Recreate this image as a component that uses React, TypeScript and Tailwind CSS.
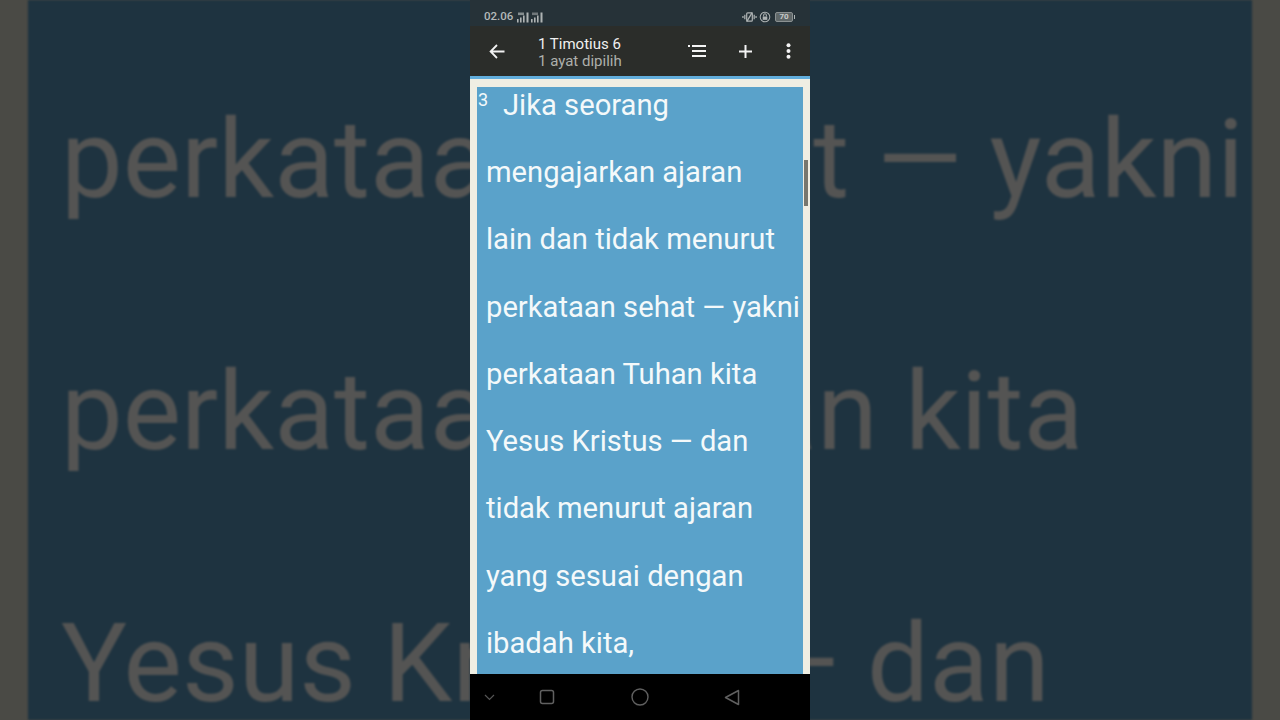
import React from "react";

const roboto = { fontFamily: "Roboto, sans-serif" };

function Signal({ label }: { label: string }) {
  return (
    <svg width="13" height="11" viewBox="0 0 13 11" fill="#aeb3b3">
      <rect x="0" y="7" width="1.6" height="3.5" />
      <rect x="3" y="5.5" width="1.6" height="5" />
      <rect x="6" y="3.5" width="1.6" height="7" />
      <rect x="9.5" y="0.5" width="2" height="10" />
      <rect x="1" y="0.5" width="6" height="2.6" opacity={label === "4G" ? 0.7 : 0.55} />
    </svg>
  );
}

const lines = [
  "mengajarkan ajaran",
  "lain dan tidak menurut",
  "perkataan sehat — yakni",
  "perkataan Tuhan kita",
  "Yesus Kristus — dan",
  "tidak menurut ajaran",
  "yang sesuai dengan",
  "ibadah kita,",
];

export default function App() {
  return (
    <div className="relative flex h-[720px] w-[1280px] justify-center overflow-hidden bg-[#4a4a45]" style={roboto}>
      <div className="absolute inset-y-0 left-[28px] w-[1224px] overflow-hidden bg-[#1e3340] pl-[33px] pt-[34px] text-[110px] leading-[252px] whitespace-nowrap text-[#545453] blur-[1px]">
        <div>perkataan sehat — yakni</div>
        <div>perkataan Tuhan kita</div>
        <div>Yesus Kristus — dan</div>
      </div>

      <div className="relative flex h-[720px] w-[340px] flex-col overflow-hidden bg-[#efeee3]">
        <div className="flex h-[26px] items-center justify-between bg-[#263238] pl-[14px] pr-[15px] pt-[12px] pb-[4px]">
          <div className="flex items-center gap-[1px] text-[11.5px] font-medium text-[#b4b9b9]">
            <span className="mr-[3px]">02.06</span>
            <Signal label="4G" />
            <Signal label="3G" />
          </div>
          <div className="flex items-center gap-[2px]">
            <svg width="15" height="12" viewBox="0 0 16 12" fill="none" stroke="#aeb3b3" strokeWidth="1.3">
              <rect x="5" y="1.5" width="6" height="9" rx="1" />
              <path d="M3 3.5v5M1 5v2M13 3.5v5M15 5v2M5 11 11 1" />
            </svg>
            <svg width="12" height="12" viewBox="0 0 13 13" fill="none" stroke="#aeb3b3" strokeWidth="1.1">
              <circle cx="6.5" cy="6.5" r="5.2" />
              <rect x="4" y="6" width="5" height="3.6" fill="#aeb3b3" stroke="none" />
              <path d="M5 6V4.6a1.5 1.5 0 0 1 3 0V6" />
            </svg>
            <div className="ml-[2px] flex h-[10px] w-[18px] items-center justify-center rounded-[2px] border border-[#8b9192] bg-[#5f6768] text-[8px] leading-none font-bold text-[#c8cccc]">
              70
            </div>
            <div className="ml-[-1px] h-[4px] w-[1px] bg-[#aeb3b3]" />
          </div>
        </div>

        <div className="flex h-[50px] items-center bg-[#2b2d2a] pl-[19px] pr-[19px]">
          <svg width="16" height="15" viewBox="0 0 16 15" fill="none" stroke="#f2f2f2" strokeWidth="1.8">
            <path d="M15.5 7.5H2M8 1 1.6 7.5 8 14" />
          </svg>
          <div className="ml-[33px] flex flex-col pt-[2px]">
            <span className="text-[15px] leading-[18px] text-[#f0f0f0]">1 Timotius 6</span>
            <span className="text-[15px] leading-[17px] text-[#aeb0ac]">1 ayat dipilih</span>
          </div>
          <div className="ml-auto flex items-center">
            <svg width="18" height="14" viewBox="0 0 18 14" fill="#f4f4f4">
              <rect x="0" y="1" width="2" height="2" />
              <rect x="4" y="1" width="14" height="2" />
              <rect x="4" y="6" width="14" height="2" />
              <rect x="4" y="11" width="14" height="2" />
            </svg>
            <svg className="ml-[33px]" width="13" height="13" viewBox="0 0 13 13" stroke="#f4f4f4" strokeWidth="2">
              <path d="M6.5 0v13M0 6.5h13" />
            </svg>
            <svg className="ml-[34px]" width="5" height="16" viewBox="0 0 5 16" fill="#f4f4f4">
              <circle cx="2.5" cy="2.2" r="2" />
              <circle cx="2.5" cy="8" r="2" />
              <circle cx="2.5" cy="13.8" r="2" />
            </svg>
          </div>
        </div>

        <div className="h-[3px] bg-[#62addb]" />

        <div className="relative min-h-0 flex-1 px-[7px] pt-[8px]">
          <div className="h-full overflow-hidden bg-[#5aa2ca] text-[29.2px] leading-[67.25px] text-[#f4f9fa] whitespace-nowrap">
            <div className="flex h-[52px] items-start leading-[36px]">
              <span className="w-[26px] pl-[1px] mt-[-5px] text-[18px] leading-[36px]">3</span>
              <span>Jika seorang</span>
            </div>
            <div className="pl-[9px]">
              {lines.map((l) => (
                <div key={l}>{l}</div>
              ))}
            </div>
          </div>
          <div className="absolute right-[2px] top-[81px] h-[46px] w-[4px] bg-[#77776e]" />
        </div>

        <div className="flex h-[46px] items-center bg-black">
          <svg className="ml-[14px]" width="11" height="7" viewBox="0 0 11 7" fill="none" stroke="#555" strokeWidth="1.2">
            <path d="M1 1l4.5 4.5L10 1" />
          </svg>
          <svg className="ml-[44px]" width="16" height="16" viewBox="0 0 16 16" fill="none" stroke="#606060" strokeWidth="1.5">
            <rect x="1.5" y="1.5" width="13" height="13" rx="2" />
          </svg>
          <svg className="ml-[76px]" width="18" height="18" viewBox="0 0 18 18" fill="none" stroke="#606060" strokeWidth="1.4">
            <circle cx="9" cy="9" r="8" />
          </svg>
          <svg className="ml-[75px]" width="16" height="17" viewBox="0 0 16 17" fill="none" stroke="#606060" strokeWidth="1.5">
            <path d="M14.5 1.5v14L1.5 8.5z" strokeLinejoin="round" />
          </svg>
        </div>
      </div>
    </div>
  );
}
